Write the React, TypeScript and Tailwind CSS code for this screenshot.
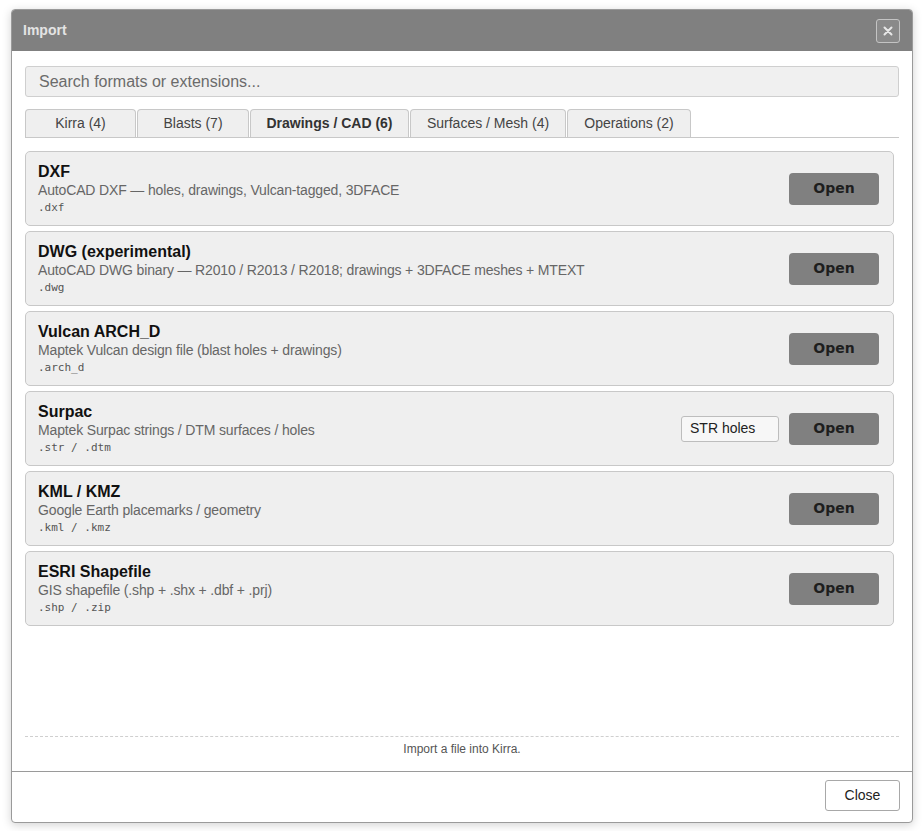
import React from "react";

type Format = {
  name: string;
  desc: string;
  ext: string;
  option?: string;
};

const formats: Format[] = [
  { name: "DXF", desc: "AutoCAD DXF — holes, drawings, Vulcan-tagged, 3DFACE", ext: ".dxf" },
  {
    name: "DWG (experimental)",
    desc: "AutoCAD DWG binary — R2010 / R2013 / R2018; drawings + 3DFACE meshes + MTEXT",
    ext: ".dwg",
  },
  { name: "Vulcan ARCH_D", desc: "Maptek Vulcan design file (blast holes + drawings)", ext: ".arch_d" },
  {
    name: "Surpac",
    desc: "Maptek Surpac strings / DTM surfaces / holes",
    ext: ".str / .dtm",
    option: "STR holes",
  },
  { name: "KML / KMZ", desc: "Google Earth placemarks / geometry", ext: ".kml / .kmz" },
  { name: "ESRI Shapefile", desc: "GIS shapefile (.shp + .shx + .dbf + .prj)", ext: ".shp / .zip" },
];

const tabs = [
  { label: "Kirra (4)", active: false, w: "w-[111px]" },
  { label: "Blasts (7)", active: false, w: "w-[112px]" },
  { label: "Drawings / CAD (6)", active: true, w: "w-[159px]" },
  { label: "Surfaces / Mesh (4)", active: false, w: "w-[156px]" },
  { label: "Operations (2)", active: false, w: "w-[124px]" },
];

const sans = "font-['Liberation_Sans',Arial,sans-serif]";

function FormatCard({ f }: { f: Format }) {
  return (
    <div className="flex h-[75px] items-center rounded-[5px] border border-[#c8c8c8] bg-[#efefef] pl-[12px] pr-[14px]">
      <div className="flex min-w-0 flex-1 flex-col">
        <div className="text-[16px] font-bold leading-[19px] text-[#111]">{f.name}</div>
        <div className="mt-[1px] text-[14px] leading-[17px] tracking-[-0.15px] text-[#666]">{f.desc}</div>
        <div className="mt-[1px] font-['DejaVu_Sans_Mono',monospace] text-[11px] leading-[16px] text-[#555]">
          {f.ext}
        </div>
      </div>
      {f.option && (
        <div className="mr-[10px] flex h-[26px] w-[98px] items-center rounded-[3px] border border-[#bdbdbd] bg-[#f7f7f7] pl-[8px] text-[14px] text-[#222]">
          {f.option}
        </div>
      )}
      <button className="flex h-[32px] w-[90px] items-center justify-center rounded-[4px] bg-[#808080] font-['DejaVu_Sans',sans-serif] text-[14px] font-bold text-[#1e1e1e]">
        Open
      </button>
    </div>
  );
}

export default function App() {
  return (
    <div className={`h-[831px] w-[923px] bg-white pl-[11px] pt-[9px] ${sans}`}>
      <div className="flex h-[814px] w-[902px] flex-col overflow-hidden rounded-[4px] border border-[#9a9a9a] bg-white shadow-[0_2px_10px_rgba(0,0,0,0.18)]">
        {/* title bar */}
        <div className="flex h-[41px] shrink-0 items-center justify-between bg-[#808080] pl-[11px] pr-[12px]">
          <span className="text-[14px] font-bold text-[#e4e4e4]">Import</span>
          <button className="flex h-[24px] w-[24px] items-center justify-center rounded-[3px] border border-[#c4c4c4] bg-[#8a8a8a]">
            <svg width="10" height="10" viewBox="0 0 10 10">
              <path d="M1.5 1.5 L8.5 8.5 M8.5 1.5 L1.5 8.5" stroke="#e8e8e8" strokeWidth="2" strokeLinecap="round" />
            </svg>
          </button>
        </div>

        {/* body */}
        <div className="flex flex-1 flex-col px-[13px] pt-[15px]">
          <div className="flex h-[31px] items-center rounded-[3px] border border-[#cfcfcf] bg-[#f0f0f0] pl-[13px] text-[16px] text-[#6b6b6b]">
            Search formats or extensions...
          </div>

          <div className="mt-[12px] flex gap-[1px] border-b border-[#c8c8c8]">
            {tabs.map((t) => (
              <div
                key={t.label}
                className={`flex h-[28px] items-center justify-center rounded-t-[4px] border border-b-0 border-[#c8c8c8] bg-[#efefef] text-[14px] ${t.w} ${
                  t.active ? "font-bold text-[#333]" : "text-[#444]"
                }`}
              >
                {t.label}
              </div>
            ))}
          </div>

          <div className="mt-[13px] mr-[5px] flex flex-col gap-[5px]">
            {formats.map((f) => (
              <FormatCard key={f.name} f={f} />
            ))}
          </div>

          <div className="flex-1" />

          <div className="border-t border-dashed border-[#cfcfcf] pb-[15px] pt-[5px] text-center text-[12px] leading-[14px] text-[#555]">
            Import a file into Kirra.
          </div>
        </div>

        {/* footer */}
        <div className="flex h-[51px] shrink-0 items-start justify-end border-t border-[#9a9a9a] pr-[12px] pt-[8px]">
          <button className="h-[31px] w-[75px] rounded-[3px] border border-[#a8a8a8] bg-white text-[14px] text-[#222]">
            Close
          </button>
        </div>
      </div>
    </div>
  );
}
